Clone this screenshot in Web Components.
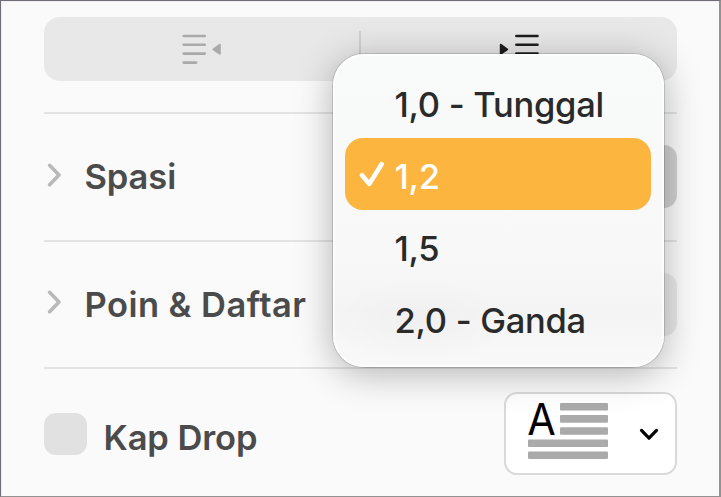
<!DOCTYPE html>
<html lang="id">
<head>
<meta charset="utf-8">
<title>Format</title>
<style>
  html, body { margin: 0; height: 100%; overflow: hidden; }
  body { font-family: Inter, "Liberation Sans", sans-serif; background: #fafafa; }
</style>
</head>
<body>
<format-panel>
  <indent-control></indent-control>
  <section-row label="Spasi" style="--spacing:-0.1px; --well:#d0d0d0"></section-row>
  <section-row label="Poin &amp; Daftar" style="--spacing:0.45px; --well:#e8e8e8"></section-row>
  <drop-cap-row>Kap Drop</drop-cap-row>
  <popup-menu slot="overlay">
    <menu-option>1,0 - Tunggal</menu-option>
    <menu-option checked>1,2</menu-option>
    <menu-option>1,5</menu-option>
    <menu-option>2,0 - Ganda</menu-option>
  </popup-menu>
</format-panel>

<script>
(() => {
  'use strict';

  class BaseElement extends HTMLElement {
    constructor() {
      super();
      this.attachShadow({ mode: 'open' });
    }
    connectedCallback() { this.shadowRoot.innerHTML = this.render(); }
  }

  // ---------- FormatPanel ----------
  class FormatPanel extends BaseElement {
    render() {
      return `
        <style>
          :host{
            display:block; position:relative; box-sizing:border-box;
            width:721px; height:497px; overflow:hidden;
            padding:16px 42px 0 43px;
            background:#fafafa;
            border:1px solid #706d74;
            border-right:2px solid #929292;
            border-bottom-color:#929292;
            box-shadow:inset 1px 1px 0 #f0eef2;
          }
        </style>
        <slot></slot>
        <slot name="overlay"></slot>
      `;
    }
  }

  // ---------- IndentControl ----------
  class IndentControl extends BaseElement {
    render() {
      return `
        <style>
          :host{
            display:grid; grid-template-columns:315px 1fr;
            width:633px; height:64px; margin-bottom:31px;
            border-radius:16px; background:#e8e8e8;
          }
          .seg{ display:flex; align-items:center; justify-content:center }
          .seg + .seg{
            padding-left:2px;
            background:linear-gradient(#d0d0d0,#d0d0d0) 0 center / 2px 36px no-repeat;
          }
          svg{ display:block; width:42px; height:32px }
          .out{ color:#aaa }
          .in{ color:#1d1d1d }
        </style>
        <div class="seg out">
          <svg viewBox="0 0 42 32">
            <path d="M2.7 3h21.1M2.7 11.8h21.1M2.7 20.6h21.1M2.7 29.6h12.5" fill="none" stroke="currentColor" stroke-width="2.6" stroke-linecap="round"/>
            <path d="M32 15.4l6.2-4.3q1.6-.8 1.6.9v8.6q0 1.7-1.6.8l-6.2-4.2q-1.4-.9 0-1.8z" fill="currentColor"/>
          </svg>
        </div>
        <div class="seg in">
          <svg viewBox="0 0 42 32">
            <path d="M18.4 3h21.1M18.4 11.8h21.1M18.4 20.6h21.1M18.4 29.6h12.5" fill="none" stroke="currentColor" stroke-width="2.6" stroke-linecap="round"/>
            <path d="M9.6 15.4l-6.2-4.3q-1.6-.8-1.6.9v8.6q0 1.7 1.6.8l6.2-4.2q1.4-.9 0-1.8z" fill="currentColor"/>
          </svg>
        </div>
      `;
    }
  }

  // ---------- SectionRow ----------
  class SectionRow extends BaseElement {
    render() {
      return `
        <style>
          :host{
            display:flex; align-items:center; box-sizing:border-box;
            width:633px; height:127.5px; padding-left:3px;
            border-top:2px solid #e3e3e3;
          }
          svg{ width:16px; height:26px; margin:-4px 21.5px 0 0 }
          .label{
            flex:1; padding-top:1px; font-size:34.5px; font-weight:600; line-height:44px;
            color:#4b4b4b; letter-spacing:var(--spacing); white-space:nowrap;
          }
          .well{ width:320px; height:63px; border-radius:13px; background:var(--well) }
        </style>
        <svg viewBox="0 0 16 26"><path d="M2.6 3.3l9.4 9.7-9.4 9.7" fill="none" stroke="#b9b9b9" stroke-width="3.6" stroke-linecap="round" stroke-linejoin="round"/></svg>
        <span class="label">${this.getAttribute('label').replace('&', '&amp;')}</span>
        <span class="well"></span>
      `;
    }
  }

  // ---------- DropCapRow ----------
  class DropCapRow extends BaseElement {
    render() {
      return `
        <style>
          :host{
            display:flex; align-items:flex-start; box-sizing:border-box;
            width:633px; height:130px; padding-top:23px;
            border-top:2px solid #e3e3e3;
          }
          .check{ width:42.5px; height:42.5px; margin:20.5px 17px 0 0; border-radius:12px; background:#e1e1e1 }
          .label{
            flex:1; margin-top:24px; font-size:34.5px; font-weight:600; line-height:44px;
            color:#4b4b4b; letter-spacing:-.1px;
          }
          .popup{
            display:flex; align-items:center; box-sizing:border-box;
            width:173px; height:83px;
            border:2px solid #d9d9d9; border-radius:13px; background:#fff;
          }
          svg{ display:block; width:100%; height:100%; overflow:visible }
        </style>
        <span class="check"></span>
        <span class="label"><slot></slot></span>
        <span class="popup">
          <svg viewBox="0 0 169 79">
            <g fill="#aaa">
              <rect x="54" y="9" width="48" height="7.5" rx="1"/>
              <rect x="54" y="21" width="48" height="7.7" rx="1"/>
              <rect x="54" y="33.2" width="48" height="7.5" rx="1"/>
              <rect x="22" y="45.5" width="80" height="7.5" rx="1"/>
              <rect x="22" y="57.6" width="80" height="7.5" rx="1"/>
            </g>
            <text x="21.3" y="40.7" font-family="Inter, sans-serif" font-size="44" font-weight="400" textLength="28.5" lengthAdjust="spacingAndGlyphs">A</text>
            <path d="M135.5 36.4l7.5 7.8 7.5-7.8" fill="none" stroke="#000" stroke-width="3.2" stroke-linecap="round" stroke-linejoin="round"/>
          </svg>
        </span>
      `;
    }
  }

  // ---------- PopupMenu ----------
  class PopupMenu extends BaseElement {
    render() {
      return `
        <style>
          :host{
            position:absolute; left:332px; top:53px; z-index:2;
            box-sizing:border-box; width:331px; height:313px;
            padding:12px 13px 0 11.5px; border-radius:31px; overflow:hidden;
            background:
              radial-gradient(ellipse 90px 45px at 26% 86%, rgba(0,0,0,.02), transparent),
              linear-gradient(#f9fafa 0, #f8f8f8 65%, #f4f4f4 82%, #f9f9f9 100%);
            box-shadow:
              0 0 0 1px rgba(0,0,0,.14),
              0 6px 36px 1px rgba(0,0,0,.28),
              inset 0 0 2px 1.5px #fff;
          }
        </style>
        <slot></slot>
      `;
    }
  }

  // ---------- MenuOption ----------
  class MenuOption extends BaseElement {
    render() {
      const checked = this.hasAttribute('checked');
      return `
        <style>
          :host{
            display:flex; align-items:center; box-sizing:border-box;
            height:72px; padding-left:14px; border-radius:18px;
            font-size:34.5px; font-weight:500; line-height:44px;
            letter-spacing:-.28px; color:#2a2a2a; white-space:pre;
          }
          :host([checked]){ background:#fcb640; color:#fff }
          svg{ width:26px; height:28px; margin-right:10px }
          span{ padding-top:6px }
        </style>
        <svg viewBox="0 0 26 28">${checked ? '<path d="M3 15.2l7.2 8.7L22.6 4.2" fill="none" stroke="#fff" stroke-width="4.6" stroke-linecap="round" stroke-linejoin="round"/>' : ''}</svg>
        <span><slot></slot></span>
      `;
    }
  }

  customElements.define('format-panel', FormatPanel);
  customElements.define('indent-control', IndentControl);
  customElements.define('section-row', SectionRow);
  customElements.define('drop-cap-row', DropCapRow);
  customElements.define('popup-menu', PopupMenu);
  customElements.define('menu-option', MenuOption);
})();
</script>
</body>
</html>
